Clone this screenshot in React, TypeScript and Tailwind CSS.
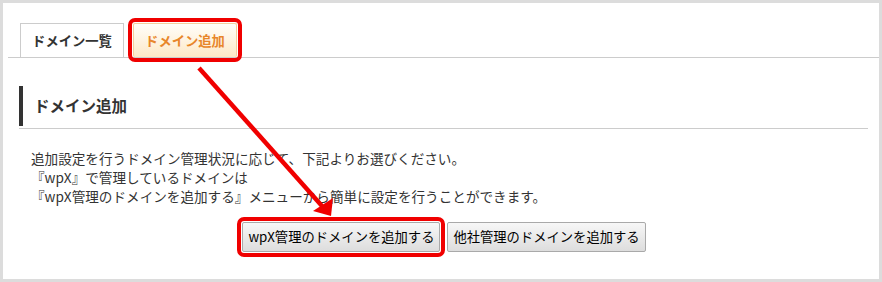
import React from 'react';

const jp = { fontFamily: '"Noto Sans CJK JP", "Noto Sans", sans-serif' };

function Tabs() {
  return (
    <div className="ml-[5px] flex items-end border-b border-[#cccccc] pl-[12px] pt-[20px]">
      <div className="flex h-[34px] w-[104px] items-center justify-center border border-b-0 border-[#cccccc] bg-white text-[13.3px] font-bold text-[#333]">
        ドメイン一覧
      </div>
      {/* active tab, red annotation box drawn as an outline */}
      <div className="ml-[9px] flex h-[34px] w-[104px] items-center justify-center rounded-[2px] border border-b-0 border-[#f3cf9c] bg-gradient-to-b from-[#fffefa] to-[#fde8c6] text-[13.3px] font-bold text-[#e8862a] outline-[4px] outline-offset-[1px] outline-[#f00000]">
        ドメイン追加
      </div>
    </div>
  );
}

export default function App() {
  return (
    <div className="h-[282px] w-[882px] bg-[#dcdcdc] p-[3px]" style={jp}>
      <div className="relative h-full w-full bg-white">
        <Tabs />

        <div className="ml-[16px] mr-[11px] mt-[28px] border-b border-[#cccccc] pb-[2px]">
          <div className="flex h-[40px] items-center border-l-4 border-[#333] pl-[11px] text-[15.5px] font-bold text-[#333]">
            ドメイン追加
          </div>
        </div>

        <div className="ml-[28px] mt-[20px] text-[13.6px] leading-[19px] text-[#333]">
          <p>追加設定を行うドメイン管理状況に応じて、下記よりお選びください。</p>
          <p>『wpX』で管理しているドメインは</p>
          <p>『wpX管理のドメインを追加する』メニューから簡単に設定を行うことができます。</p>
        </div>

        <div className="mt-[16px] flex justify-center gap-[7px] pl-[6px]">
          <button className="h-[30px] rounded-[2px] border border-[#a9a9a9] bg-gradient-to-b from-[#f7f7f7] to-[#dddddd] px-[5px] text-[13.3px] text-black outline-[4px] outline-offset-[1px] outline-[#f00000]">
            wpX管理のドメインを追加する
          </button>
          <button className="h-[30px] rounded-[2px] border border-[#a9a9a9] bg-gradient-to-b from-[#f7f7f7] to-[#dddddd] px-[5px] text-[13.3px] text-black">
            他社管理のドメインを追加する
          </button>
        </div>

        {/* annotation arrow */}
        <svg className="pointer-events-none absolute left-[-3px] top-[-3px]" width="882" height="282" viewBox="0 0 882 282">
          <line x1="199" y1="68" x2="322" y2="206" stroke="#f00000" strokeWidth="4.5" />
          <polygon points="331,216 313,211 333,198" fill="#f00000" />
        </svg>
      </div>
    </div>
  );
}
